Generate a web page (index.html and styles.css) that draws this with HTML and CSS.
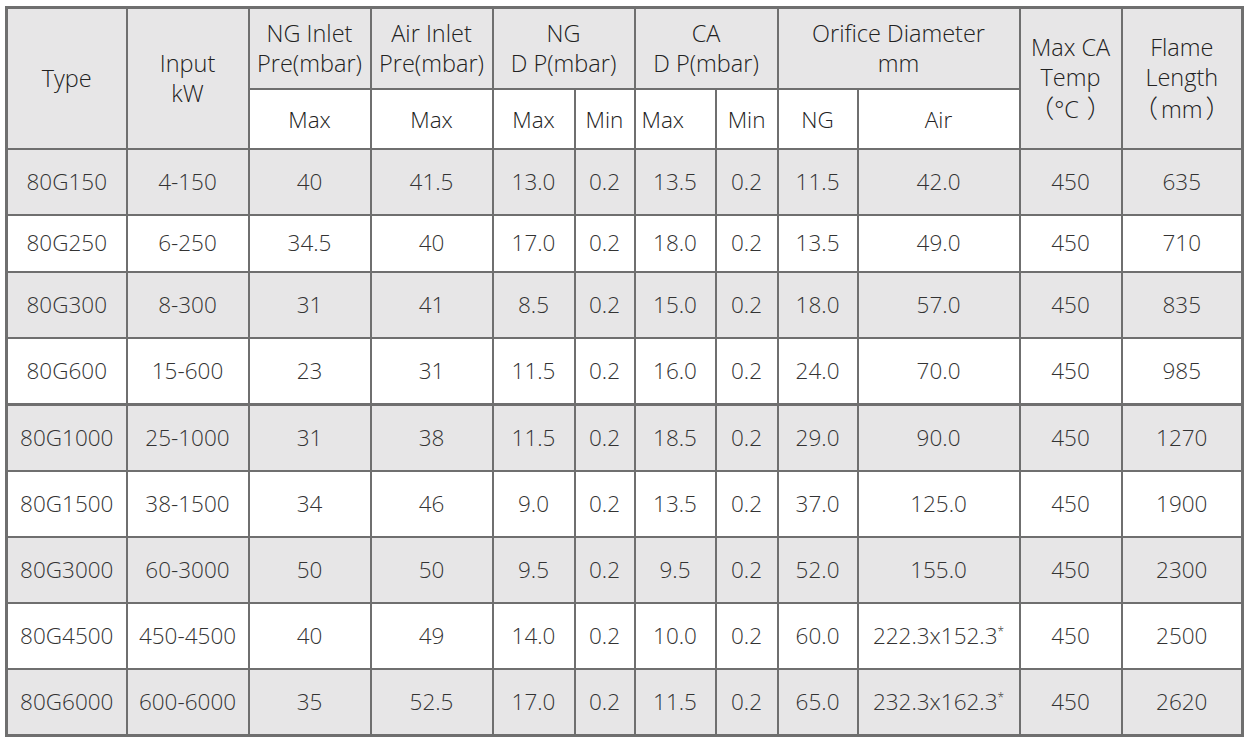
FILE: index.html
```html
<!DOCTYPE html>
<html>
<head>
<meta charset="utf-8">
<link rel="stylesheet" href="styles.css">
</head>
<body>
<table class="spec">
  <colgroup>
    <col class="c-type"><col class="c-input"><col class="c-ngin"><col class="c-airin">
    <col class="c-ngmax"><col class="c-ngmin"><col class="c-camax"><col class="c-camin">
    <col class="c-ong"><col class="c-oair"><col class="c-temp"><col class="c-flame">
  </colgroup>
  <thead>
    <tr class="h1">
      <th rowspan="2">Type</th>
      <th rowspan="2">Input<br>kW</th>
      <th>NG Inlet<br>Pre(mbar)</th>
      <th>Air Inlet<br>Pre(mbar)</th>
      <th colspan="2">NG<br>D P(mbar)</th>
      <th colspan="2">CA<br>D P(mbar)</th>
      <th colspan="2">Orifice Diameter<br>mm</th>
      <th rowspan="2">Max CA<br>Temp<br><span class="fw">（</span>°C<span class="fw fw-c">）</span></th>
      <th rowspan="2">Flame<br>Length<br><span class="fw fw-o">（</span>mm<span class="fw fw-m">）</span></th>
    </tr>
    <tr class="h2">
      <th>Max</th>
      <th>Max</th>
      <th>Max</th>
      <th>Min</th>
      <th class="thin-l">Max</th>
      <th class="thin">Min</th>
      <th>NG</th>
      <th>Air</th>
    </tr>
  </thead>
  <tbody>
    <tr class="g"><td>80G150</td><td>4-150</td><td>40</td><td>41.5</td><td>13.0</td><td>0.2</td><td>13.5</td><td class="thin">0.2</td><td>11.5</td><td>42.0</td><td>450</td><td>635</td></tr>
    <tr class="w short"><td>80G250</td><td>6-250</td><td>34.5</td><td>40</td><td>17.0</td><td>0.2</td><td>18.0</td><td class="thin">0.2</td><td>13.5</td><td>49.0</td><td>450</td><td>710</td></tr>
    <tr class="g"><td>80G300</td><td>8-300</td><td>31</td><td>41</td><td>8.5</td><td>0.2</td><td>15.0</td><td class="thin">0.2</td><td>18.0</td><td>57.0</td><td>450</td><td>835</td></tr>
    <tr class="w"><td>80G600</td><td>15-600</td><td>23</td><td>31</td><td>11.5</td><td>0.2</td><td>16.0</td><td class="thin">0.2</td><td>24.0</td><td>70.0</td><td>450</td><td>985</td></tr>
    <tr class="g thick"><td>80G1000</td><td>25-1000</td><td>31</td><td>38</td><td>11.5</td><td>0.2</td><td>18.5</td><td class="thin">0.2</td><td>29.0</td><td>90.0</td><td>450</td><td>1270</td></tr>
    <tr class="w"><td>80G1500</td><td>38-1500</td><td>34</td><td>46</td><td>9.0</td><td>0.2</td><td>13.5</td><td class="thin">0.2</td><td>37.0</td><td>125.0</td><td>450</td><td>1900</td></tr>
    <tr class="g"><td>80G3000</td><td>60-3000</td><td>50</td><td>50</td><td>9.5</td><td>0.2</td><td>9.5</td><td class="thin">0.2</td><td>52.0</td><td>155.0</td><td>450</td><td>2300</td></tr>
    <tr class="w"><td>80G4500</td><td>450-4500</td><td>40</td><td>49</td><td>14.0</td><td>0.2</td><td>10.0</td><td class="thin">0.2</td><td>60.0</td><td>222.3x152.3<sup>*</sup></td><td>450</td><td>2500</td></tr>
    <tr class="g"><td>80G6000</td><td>600-6000</td><td>35</td><td>52.5</td><td>17.0</td><td>0.2</td><td>11.5</td><td class="thin">0.2</td><td>65.0</td><td>232.3x162.3<sup>*</sup></td><td>450</td><td>2620</td></tr>
  </tbody>
</table>
</body>
</html>
```
FILE: styles.css
```css
html, body {
  margin: 0;
  padding: 0;
  background: #ffffff;
}

body {
  padding: 6px 0 0 5px;
  font-family: "Open Sans", "Noto Sans", "Noto Sans CJK SC", sans-serif;
  color: #333333;
}

.spec {
  border-collapse: collapse;
  table-layout: fixed;
  width: 1237px;
  border: 3px solid #6f6f6f;
  font-size: 22.5px;
}

.c-type { width: 120px; }
.c-input { width: 122px; }
.c-ngin { width: 122px; }
.c-airin { width: 122px; }
.c-ngmax { width: 82px; }
.c-ngmin { width: 60px; }
.c-camax { width: 81px; }
.c-camin { width: 62px; }
.c-ong { width: 80px; }
.c-oair { width: 162px; }
.c-temp { width: 102px; }
.c-flame { width: 121px; }

.spec th,
.spec td {
  border: 2px solid #6f6f6f;
  padding: 0;
  text-align: center;
  vertical-align: middle;
  font-weight: 300;
  white-space: nowrap;
  overflow: visible;
}

.spec th {
  background: #e7e6e7;
  color: #222222;
  line-height: 30px;
  font-size: 23.5px;
  font-weight: 350;
}

.fw {
  font-family: "Noto Sans CJK SC", "Noto Sans CJK JP", sans-serif;
  font-weight: 300;
  font-size: 25px;
}

.fw-c { margin-left: 8px; }
.fw-o { margin-right: 3px; }
.fw-m { margin-left: 3px; }

.h1 { height: 81px; }
.h2 { height: 60px; }

.h2 th {
  background: #ffffff;
  line-height: 30px;
  padding-top: 2px;
  font-size: 22.5px;
  font-weight: 300;
}

.spec td {
  height: 64px;
  line-height: 30px;
  color: #333333;
}

.spec tr.short td { height: 55px; }

.spec tr.g td { background: #e7e6e7; }
.spec tr.w td { background: #ffffff; }

.spec tr.thick td { border-top: 3px solid #6f6f6f; }

.spec .thin,
.spec td.thin {
  border-left: 1px solid #111111;
}

.spec th.thin-l {
  text-align: left;
  padding-left: 6px;
}

.spec sup {
  font-size: 12px;
  line-height: 0;
  vertical-align: 8px;
}
```
